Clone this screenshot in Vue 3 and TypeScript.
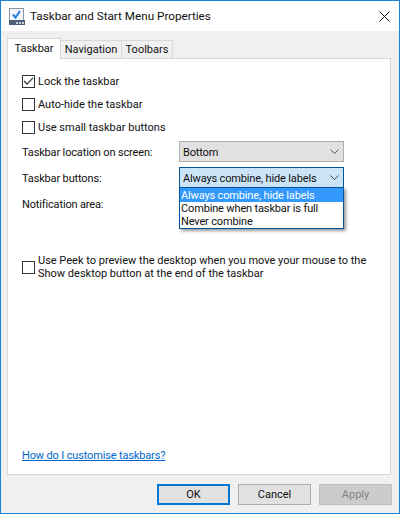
<template>
  <div class="window">
    <header class="titlebar">
      <svg class="app-icon" width="16" height="17" viewBox="0 0 16 17">
        <rect x="0.5" y="0.5" width="14" height="12" fill="#f4f7fb" stroke="#8a94a3" />
        <path d="M4 6.5l2.5 3L11 3" fill="none" stroke="#2a7ae0" stroke-width="2" />
        <rect x="0" y="12" width="16" height="5" fill="#4f6078" />
        <rect x="7" y="14" width="2" height="2" fill="#c8d0dc" />
        <rect x="10" y="14" width="2" height="2" fill="#c8d0dc" />
        <rect x="13" y="14" width="2" height="2" fill="#c8d0dc" />
      </svg>
      <span class="title">Taskbar and Start Menu Properties</span>
      <svg class="close" width="11" height="11" viewBox="0 0 11 11">
        <path d="M0.5 0.5l10 10M10.5 0.5l-10 10" stroke="#111" stroke-width="1" fill="none" />
      </svg>
    </header>

    <div class="content">
      <div class="tabs">
        <div v-for="(tab, i) in tabs" :key="tab.label" class="tab" :class="{ active: i === 0 }" :style="{ width: tab.width + 'px' }">
          {{ tab.label }}
        </div>
      </div>

      <section class="panel">
        <div class="checks">
          <label v-for="item in checks" :key="item.text" class="check-row">
            <span class="box" :class="{ on: item.checked }">
              <svg v-if="item.checked" width="11" height="11" viewBox="0 0 11 11">
                <path d="M1.2 5l2.8 3.2L10 1.8" fill="none" stroke="#333" stroke-width="1.2" />
              </svg>
            </span>
            <span class="txt">{{ item.text }}</span>
          </label>
        </div>

        <div class="form">
          <div class="form-row">
            <span class="txt tight">Taskbar location on screen:</span>
            <div class="select">
              <span class="txt tight">Bottom</span>
              <svg class="chev" width="9" height="5" viewBox="0 0 9 5"><path d="M0.5 0.5L4.5 4.5l4-4" fill="none" stroke="#555" /></svg>
            </div>
          </div>
          <div class="form-row">
            <span class="txt tight">Taskbar buttons:</span>
            <div class="select open">
              <span class="txt tight">Always combine, hide labels</span>
              <svg class="chev" width="9" height="5" viewBox="0 0 9 5"><path d="M0.5 0.5L4.5 4.5l4-4" fill="none" stroke="#444" /></svg>
              <ul class="dropdown">
                <li v-for="(opt, i) in options" :key="opt" :class="{ selected: i === 0 }">{{ opt }}</li>
              </ul>
            </div>
          </div>
          <div class="form-row">
            <span class="txt tight">Notification area:</span>
          </div>
        </div>

        <label class="check-row peek">
          <span class="box"></span>
          <span>Use Peek to preview the desktop when you move your mouse to the<br />Show desktop button at the end of the taskbar</span>
        </label>

        <a class="help tight" href="#">How do I customise taskbars?</a>
      </section>

      <footer class="buttons">
        <button class="btn default">OK</button>
        <button class="btn">Cancel</button>
        <button class="btn disabled">Apply</button>
      </footer>
    </div>
  </div>
</template>

<script setup lang="ts">
  const tabs: { label: string; width: number }[] = [
    { label: 'Taskbar', width: 54 },
    { label: 'Navigation', width: 61 },
    { label: 'Toolbars', width: 51 },
  ];

  const checks: { text: string; checked: boolean }[] = [
    { text: 'Lock the taskbar', checked: true },
    { text: 'Auto-hide the taskbar', checked: false },
    { text: 'Use small taskbar buttons', checked: false },
  ];

  const options: string[] = ['Always combine, hide labels', 'Combine when taskbar is full', 'Never combine'];
</script>

<style>
  html,
  body {
    margin: 0;
    background: #fff;
  }
</style>

<style scoped>
  .window {
    box-sizing: border-box;
    width: 400px;
    height: 514px;
    display: flex;
    flex-direction: column;
    border: 1px solid #1883d7;
    font-family: 'Roboto', 'Open Sans', sans-serif;
    font-size: 11px;
    color: #111;
    background: #f0f0f0;
  }

  .titlebar {
    height: 30px;
    flex: none;
    display: flex;
    align-items: center;
    padding: 0 9px 0 8px;
    background: #fff;
  }

  .app-icon {
    flex: none;
    margin-right: 5px;
  }

  .title {
    flex: 1;
    font-size: 11.7px;
    white-space: nowrap;
  }

  .content {
    flex: 1;
    display: flex;
    flex-direction: column;
    padding: 7px 8px 0 6px;
  }

  .tabs {
    display: flex;
    height: 20px;
    align-items: flex-end;
    position: relative;
    z-index: 1;
  }

  .tab {
    box-sizing: border-box;
    height: 18px;
    line-height: 18px;
    text-align: center;
    background: #f0f0f0;
    border: 1px solid #d9d9d9;
    border-left: none;
    border-bottom: none;
  }

  .tab.active {
    height: 21px;
    margin-bottom: -1px;
    line-height: 19px;
    background: #fff;
    border-left: 1px solid #d9d9d9;
  }

  .panel {
    box-sizing: border-box;
    flex: 1;
    display: flex;
    flex-direction: column;
    padding: 14px 14px 12px 14px;
    background: #fff;
    border: 1px solid #d9d9d9;
  }

  .checks {
    display: flex;
    flex-direction: column;
    gap: 7px;
  }

  .check-row {
    display: flex;
    align-items: center;
    gap: 3px;
    line-height: 16px;
    white-space: nowrap;
  }

  .txt {
    padding-top: 2px;
    line-height: 16px;
  }

  .checks .check-row {
    height: 16px;
  }

  .tight {
    letter-spacing: -0.15px;
  }

  .box {
    box-sizing: border-box;
    width: 13px;
    height: 13px;
    flex: none;
    display: flex;
    align-items: center;
    justify-content: center;
    background: #fff;
    border: 1px solid #333;
  }

  .form {
    display: flex;
    flex-direction: column;
    gap: 5px;
    margin-top: 6px;
  }

  .form-row {
    display: flex;
    align-items: center;
    height: 21px;
    white-space: nowrap;
  }

  .form-row > span {
    width: 157px;
    flex: none;
  }

  .select {
    box-sizing: border-box;
    position: relative;
    width: 165px;
    height: 21px;
    display: flex;
    align-items: center;
    justify-content: space-between;
    padding: 0 4px 0 3px;
    background: #e1e1e1;
    border: 1px solid #adadad;
  }

  .select.open {
    background: #cce4f7;
    border-color: #005499;
  }

  .chev {
    flex: none;
  }

  .dropdown {
    position: absolute;
    top: 19px;
    left: -1px;
    box-sizing: border-box;
    width: 165px;
    margin: 0;
    padding: 0;
    list-style: none;
    background: #fff;
    border: 1px solid #005499;
    box-shadow: 2px 2px 3px rgba(0, 0, 0, 0.4);
    line-height: 13px;
    letter-spacing: -0.15px;
  }

  .dropdown li {
    padding-left: 1px;
  }

  .dropdown li.selected {
    padding-top: 1px;
    background: #3399ff;
    color: #fff;
  }

  .peek {
    margin-top: 40px;
    line-height: 13px;
  }

  .help {
    margin-top: auto;
    color: #0066cc;
  }

  .buttons {
    display: flex;
    justify-content: flex-end;
    gap: 8px;
    margin-right: -1px;
    padding: 9px 0 0;
    height: 38px;
    box-sizing: border-box;
  }

  .btn {
    box-sizing: border-box;
    width: 73px;
    height: 21px;
    padding: 0;
    font: inherit;
    color: #111;
    background: #e1e1e1;
    border: 1px solid #adadad;
  }

  .btn.default {
    border: 2px solid #0078d7;
  }

  .btn.disabled {
    color: #838383;
    background: #cccccc;
    border-color: #bfbfbf;
  }
</style>
